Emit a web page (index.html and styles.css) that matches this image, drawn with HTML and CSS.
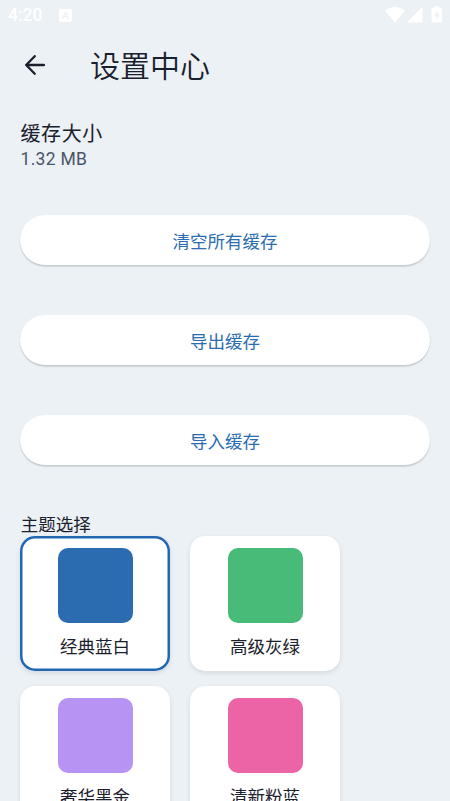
FILE: index.html
```html
<!DOCTYPE html>
<html lang="zh-CN">
<head>
<meta charset="utf-8">
<title>设置中心</title>
<link rel="stylesheet" href="styles.css">
</head>
<body>
<div class="screen">
  <div class="status">
    <span class="time">4:20</span>
    <svg class="app-badge" width="13" height="13" viewBox="0 0 13 13"><path fill="#fff" fill-rule="evenodd" d="M1.500 0h10A1.500 1.500 0 0 1 13 1.500v10a1.500 1.500 0 0 1-1.500 1.500h-10A1.500 1.500 0 0 1 0 11.500v-10A1.500 1.500 0 0 1 1.500 0zM5.700 2.800 3 10h1.500l.6-1.700h2.800l.6 1.700H10L7.300 2.800zM6.500 4.500l.9 2.600H5.600z"/></svg>
    <svg class="signals" width="58" height="18" viewBox="0 0 58 18" fill="#fff"><path d="M0 4.700C5.500-.4 14.500-.4 20 4.700L10 16.500z"/><path d="M37.500 1v15.500H22z"/><path fill-rule="evenodd" d="M49.500 0h4.500v1.500h1.500a1.500 1.500 0 0 1 1.500 1.500v12a1.500 1.500 0 0 1-1.500 1.500h-7.500a1.500 1.500 0 0 1-1.500-1.500V3A1.500 1.500 0 0 1 48 1.500h1.500zM52.500 4.500l-3.300 5.400h2.200v3.900l3.200-5.500h-2.100z"/></svg>
  </div>
  <header class="appbar">
    <svg width="20" height="20" viewBox="0 0 20 20" fill="none" stroke="#1a202c" stroke-width="2.300" stroke-linecap="round" stroke-linejoin="round"><path d="M19 10H1.200M9.700 1.200 1.200 10l8.500 8.700"/></svg>
    <h1>设置中心</h1>
  </header>
  <main>
    <div class="cache-title">缓存大小</div>
    <div class="cache-size">1.32 MB</div>
    <div class="actions">
      <button>清空所有缓存</button>
      <button>导出缓存</button>
      <button>导入缓存</button>
    </div>
    <h2>主题选择</h2>
    <div class="themes">
      <div class="theme selected"><i class="swatch blue"></i><span>经典蓝白</span></div>
      <div class="theme"><i class="swatch green"></i><span>高级灰绿</span></div>
      <div class="theme"><i class="swatch purple"></i><span>奢华黑金</span></div>
      <div class="theme"><i class="swatch pink"></i><span>清新粉蓝</span></div>
    </div>
  </main>
</div>
</body>
</html>
```
FILE: styles.css
```css
* { box-sizing: border-box; }
body {
  margin: 0;
  background: #ebf1f5;
  color: #1a202c;
  font-family: Roboto, "Noto Sans CJK SC", sans-serif;
}
.screen { height: 801px; overflow: hidden; }
.status {
  height: 30px;
  padding: 0 8px;
  display: flex;
  align-items: center;
}
.time {
  width: 51px;
  color: #fff;
  font-size: 17.5px;
  font-weight: 500;
  line-height: 32px;
}
.signals { margin-left: auto; margin-right: -1px; }
.appbar {
  height: 70px;
  padding-left: 25px;
  display: flex;
  align-items: center;
}
h1 {
  margin: 4px 0 0 45px;
  font-size: 30px;
  font-weight: 350;
  line-height: 40px;
}
main { padding: 18px 20px 0; }
.cache-title {
  height: 30px;
  padding-left: 0.5px;
  font-size: 20px;
  line-height: 32px;
  letter-spacing: 0.6px;
}
.cache-size {
  height: 22px;
  padding-left: 0.5px;
  color: #4a5568;
  font-size: 17.5px;
  line-height: 22px;
  letter-spacing: 0.3px;
}
.actions {
  margin-top: 45.3px;
  display: grid;
  gap: 50px;
}
button {
  height: 50px;
  padding: 1px 0 0;
  border: 0;
  border-radius: 25px;
  background: #fff;
  box-shadow: 0 1.5px 1.5px rgba(0, 0, 0, .18);
  color: #2b6cb0;
  font: inherit;
  font-size: 17.5px;
}
h2 {
  margin: 48.3px 0 0;
  padding-left: 0.8px;
  height: 22px;
  font-size: 17.5px;
  font-weight: 400;
  line-height: 23px;
}
.themes {
  display: grid;
  grid-template-columns: 150px 150px;
  gap: 15px 20px;
}
.theme {
  height: 135px;
  padding-top: 12.5px;
  border-radius: 15px;
  background: #fff;
  box-shadow: 0 2px 5px rgba(0, 0, 0, .1);
  display: flex;
  flex-direction: column;
  align-items: center;
}
.selected {
  box-shadow: inset 0 0 0 2.5px #2167b1, 0 2px 5px rgba(0, 0, 0, .1);
}
.swatch {
  width: 75px;
  height: 75px;
  border-radius: 10px;
}
.blue { background: #2b6cb0; }
.green { background: #48bb78; }
.purple { background: #b794f4; }
.pink { background: #ed64a6; }
.theme span {
  margin-top: 12.4px;
  font-size: 17.5px;
  line-height: 24px;
}
```
